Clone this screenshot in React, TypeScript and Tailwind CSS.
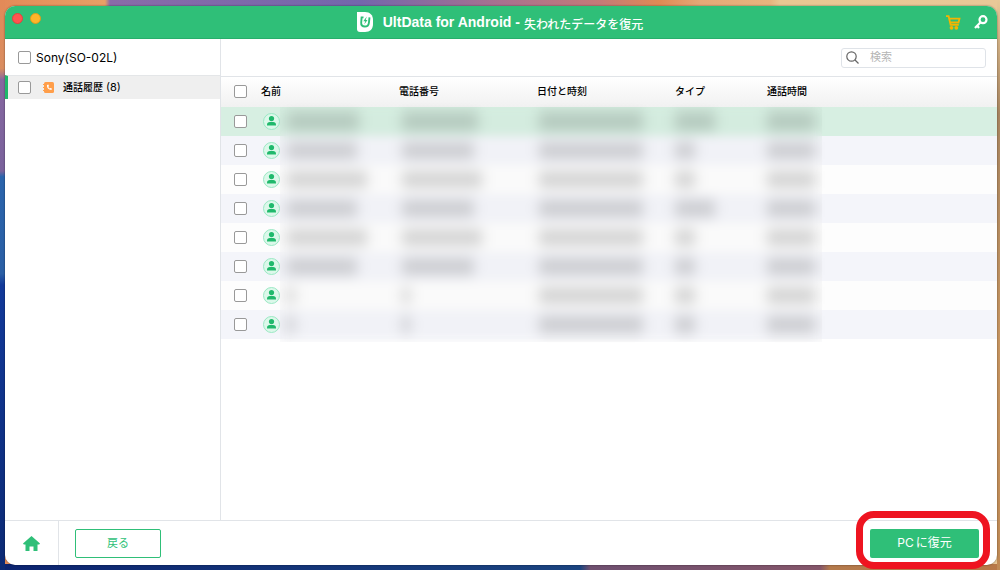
import type { InputHTMLAttributes } from "react";

const sans = "font-['Inter','Noto_Sans_CJK_JP',sans-serif]";

const wallpaper =
  "[background:linear-gradient(to_bottom,#e38a58,#d98d60_12%,#8667a0_14%,#7a629c_30%,#2b64ac_31%,#2a5fa5_48%,#12399a_50%,#0c2a74)_left/5px_100%_no-repeat,linear-gradient(to_bottom,#e9c898,#a88560_20%,#c79560_60%,#c08a55)_right/3px_100%_no-repeat,linear-gradient(to_right,#0c2470,#1b4480_58%,#6f5070_59%,#85566a_82%,#b47a4c_83%,#b87848)_bottom/100%_6px_no-repeat,linear-gradient(to_right,#e38a58,#e8a066_10.500%,#8a6ba8_11%,#7466ac_36%,#a8718f_50%,#c47a78_60%,#e08a54_66%,#e5a877_70%,#e7b47e_77%,#e9c792_78%,#e9c898)]";

// widths of the values hidden behind the privacy blur
const calls = [
  { name: "w-[72px]", phone: "w-[76px]", type: "w-10", selected: true },
  { name: "w-[70px]", phone: "w-[72px]", type: "w-5" },
  { name: "w-20", phone: "w-20", type: "w-5" },
  { name: "w-[70px]", phone: "w-[72px]", type: "w-10" },
  { name: "w-20", phone: "w-20", type: "w-5" },
  { name: "w-[70px]", phone: "w-[72px]", type: "w-5" },
  { name: "w-2", phone: "w-2", type: "w-5" },
  { name: "w-2", phone: "w-2", type: "w-5" },
];

function Checkbox(props: InputHTMLAttributes<HTMLInputElement>) {
  return (
    <input
      type="checkbox"
      className="block size-[13px] shrink-0 appearance-none rounded-[2px] border border-[#999] bg-white checked:bg-[#2fbf78]"
      {...props}
    />
  );
}

function Avatar() {
  return (
    <svg viewBox="0 0 17 17" className="size-[17px] shrink-0" aria-hidden="true">
      <circle cx="8.5" cy="8.5" r="8" fill="#dcf8ea" stroke="#9be8c4" />
      <circle cx="8.5" cy="5.6" r="2.6" fill="#20b96c" />
      <path d="M4 12.600v-1c0-1.600 1.200-2.600 2.800-2.600h3.400c1.600 0 2.800 1 2.800 2.600v1z" fill="#20b96c" />
    </svg>
  );
}

function Masked({ width }: { width: string }) {
  return <span aria-hidden="true" className={`block h-[17px] bg-black/15 blur-[5px] ${width}`} />;
}

function TitleBar() {
  return (
    <header className="flex h-[33px] shrink-0 items-center rounded-t-[10px] border-b border-[#27ae6b] bg-[#2fbf78] text-white">
      <div className="flex flex-1 gap-[7px] self-start pt-[7px] pl-[7px]">
        <button aria-label="閉じる" className="size-[11px] rounded-full border border-[#e0443e] bg-[#ff5450]" />
        <button aria-label="最小化" className="size-[11px] rounded-full border border-[#e09a1a] bg-[#ffb52a]" />
      </div>
      <h1 className="flex items-center">
        <svg viewBox="0 0 16 20" className="mr-[10px] h-5 w-4" aria-hidden="true">
          <path d="M0 0h8c5 0 8 3 8 8v4c0 5-3 8-8 8H3c-2 0-3-1-3-3z" fill="#fff" />
          <path
            d="M6.500 5.400H4.600L4.200 10.500c-.3 2.600 1.200 4 3.600 4s3.800-1.300 4.100-3.700l.6-5.400"
            fill="none"
            stroke="#2fbf78"
            strokeWidth="1.900"
          />
          <path d="M9.800 4.500 6.300 9.300h2L7.200 12.600l3.300-4.500H8.700z" fill="#2fbf78" />
        </svg>
        <span className="font-['Liberation_Sans',sans-serif] text-sm font-bold">UltData for Android -</span>
        <span className="ml-1 pt-[3px] font-['Noto_Sans_CJK_JP',sans-serif] text-xs font-medium">
          失われたデータを復元
        </span>
      </h1>
      <div className="flex flex-1 justify-end gap-[13px] pr-[9px]">
        <button aria-label="購入">
          <svg viewBox="0 0 15 15" className="size-[15px]" fill="none" aria-hidden="true">
            <path d="M0 1.200h2.600L4.600 9.800h8.200M3.300 3.600h10.200l-1 3.900H4.400" stroke="#f5b400" strokeWidth="1.800" />
            <circle cx="5.500" cy="12.800" r="1.900" fill="#f5b400" />
            <circle cx="10.300" cy="12.800" r="1.900" fill="#f5b400" />
          </svg>
        </button>
        <button aria-label="登録">
          <svg viewBox="0 0 14 14" className="size-[14px]" fill="none" stroke="#fff" aria-hidden="true">
            <circle cx="9" cy="4.700" r="3.500" strokeWidth="2.200" />
            <path d="M6.800 7 1 13M3 10.500l2 2.500" strokeWidth="2.200" />
          </svg>
        </button>
      </div>
    </header>
  );
}

function Sidebar() {
  return (
    <aside className="w-[216px] shrink-0 border-r border-[#e1e4e8]">
      <label className="flex h-9 items-center gap-[5px] pt-px pl-[13px] text-xs text-black">
        <Checkbox />
        Sony(SO-02L)
      </label>
      <label className="flex h-6 items-center border-t border-l-[3px] border-t-[#e4e6e8] border-l-[#1fb76a] bg-[#efefef] pl-[10px] text-[10px] font-medium text-black">
        <Checkbox />
        <svg viewBox="0 0 11 11" className="mr-[9px] ml-3 size-[11px]" aria-hidden="true">
          <rect x="1" width="10" height="11" rx="1.500" fill="#ff9e4a" />
          <path d="M0 2.500h2M0 5.500h2M0 8.500h2" stroke="#ff9e4a" />
          <path
            d="M4 3c-.4 2.600 1.600 4.800 4.500 5l.4-1.400-1.500-.7-.7.600C5.900 6 5.500 5.500 5.300 4.800l.7-.6L5.400 2.600z"
            fill="#fff"
          />
        </svg>
        通話履歴 <span className="ml-[3px] text-[11px] font-normal">(8)</span>
      </label>
    </aside>
  );
}

function CallTable() {
  return (
    <div className="relative">
      <table className="w-full table-fixed border-collapse text-left text-[10px] text-black">
        <colgroup>
          <col className="w-10" />
          <col className="w-[138px]" />
          <col className="w-[138px]" />
          <col className="w-[138px]" />
          <col className="w-[92px]" />
          <col />
        </colgroup>
        <thead>
          <tr className="h-[30px] bg-linear-to-b from-white to-[#f1f1f1] *:p-0 *:pb-px *:font-medium">
            <th className="pl-[13px]!">
              <Checkbox aria-label="すべて選択" />
            </th>
            <th>名前</th>
            <th>電話番号</th>
            <th>日付と時刻</th>
            <th>タイプ</th>
            <th>通話時間</th>
          </tr>
        </thead>
        <tbody>
          {calls.map((call, i) => (
            <tr
              key={i}
              className={`h-[29px] *:p-0 ${call.selected ? "bg-[#d7efe2]" : i % 2 ? "bg-[#f4f5fa]" : "bg-[#fdfdfd]"}`}
            >
              <td className="pl-[13px]!">
                <Checkbox aria-label={`通話 ${i + 1}`} />
              </td>
              <td>
                <div className="flex items-center gap-[7px] pl-[2px]">
                  <Avatar />
                  <Masked width={call.name} />
                </div>
              </td>
              <td className="pl-[3px]!">
                <Masked width={call.phone} />
              </td>
              <td className="pl-[2px]!">
                <Masked width="w-[104px]" />
              </td>
              <td>
                <Masked width={call.type} />
              </td>
              <td>
                <Masked width="w-12" />
              </td>
            </tr>
          ))}
        </tbody>
      </table>
      <div className="absolute top-[30px] -bottom-[3px] left-[59px] w-[542px] bg-black/1 backdrop-blur-[5px]" />
    </div>
  );
}

function Footer() {
  return (
    <footer className="flex h-[45px] shrink-0 items-center border-t border-[#e1e4e8]">
      <button aria-label="ホーム" className="flex h-full w-[54px] items-center justify-center border-r border-[#e1e4e8]">
        <svg viewBox="0 0 17 15" className="h-[15px] w-[17px]" fill="#2fbf78" aria-hidden="true">
          <path d="M8.500 0 17 7.500l-.8 1H14.500V15h-4v-4.500h-4V15h-4V8.500H.8L0 7.500z" />
        </svg>
      </button>
      <button className="ml-4 h-[29px] w-[86px] rounded-[2px] border border-current text-[11px] text-[#2fbf78]">
        戻る
      </button>
      <div className="relative mr-[18px] ml-auto">
        <button className="block h-[29px] w-[109px] rounded-[2px] bg-[#2fbf78] text-xs text-white">
          PC<span className="ml-[2px]">に復元</span>
        </button>
        {/* highlight ring around the action */}
        <div className="pointer-events-none absolute -top-[18px] -right-[11px] -bottom-[11px] -left-[14px] rounded-[18px] border-[7px] border-[#ee1420]" />
      </div>
    </footer>
  );
}

export default function App() {
  return (
    <div className={`flex h-screen overflow-hidden pt-[6px] pr-[3px] pb-[5px] pl-[5px] ${wallpaper} ${sans}`}>
      <div className="flex min-w-0 flex-1 flex-col rounded-[10px] bg-white shadow-[0_0_2px_#0008]">
        <TitleBar />
        <main className="flex min-h-0 flex-1">
          <Sidebar />
          <section className="min-w-0 flex-1">
            <div className="flex h-[38px] items-center justify-end border-b border-[#e1e4e8] pr-[11px]">
              <label className="flex h-5 w-[145px] items-center rounded-[3px] border border-[#dfe3e8] pl-1">
                <svg viewBox="0 0 13 13" className="size-[13px] shrink-0" fill="none" stroke="#666" aria-hidden="true">
                  <circle cx="5.500" cy="5.500" r="4.700" strokeWidth="1.200" />
                  <path d="m9 9 3.500 3.500" strokeWidth="1.200" />
                </svg>
                <input
                  type="search"
                  aria-label="検索"
                  placeholder="検索"
                  className="ml-[11px] w-full min-w-0 text-[11px] outline-none placeholder:text-[#b5b5b5]"
                />
              </label>
            </div>
            <CallTable />
          </section>
        </main>
        <Footer />
      </div>
    </div>
  );
}
